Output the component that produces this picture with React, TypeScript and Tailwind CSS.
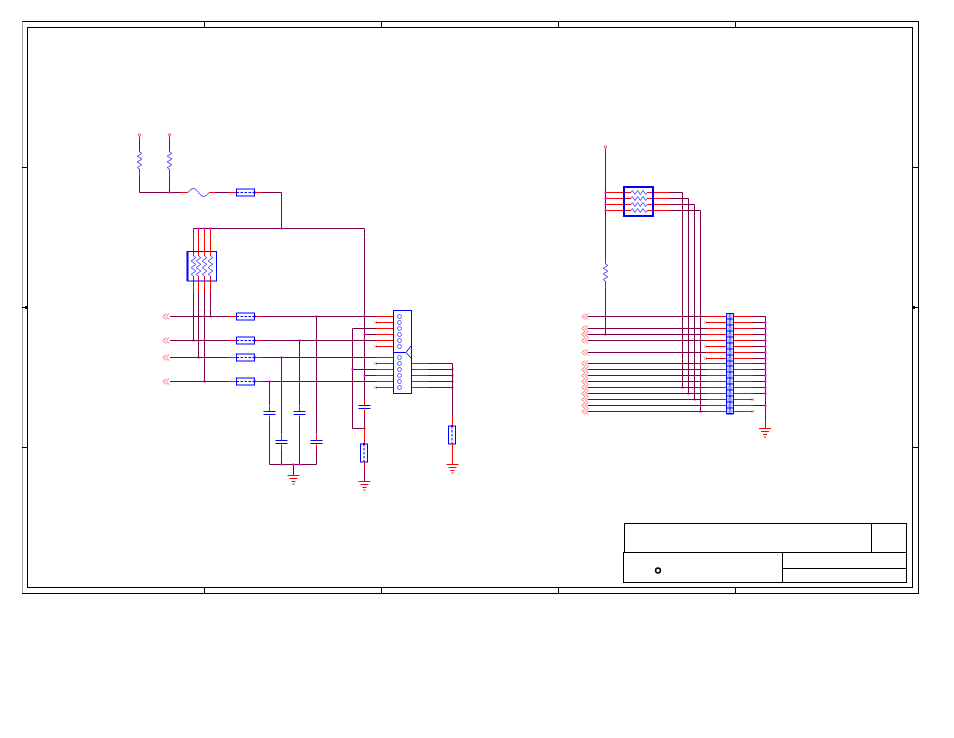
const P = "#7d0044";
const R = "#ff0000";
const B = "#0000ff";
const Z = "#3c3cff";
const J = "#ff00ff";
const K = "#000000";

type Pts = [number, number][];

function L({ x1, y1, x2, y2, c = P, w = 1 }: { x1: number; y1: number; x2: number; y2: number; c?: string; w?: number }) {
  return <line x1={x1} y1={y1} x2={x2} y2={y2} stroke={c} strokeWidth={w} />;
}
function Poly({ pts, c = P, w = 1 }: { pts: Pts; c?: string; w?: number }) {
  return <polyline points={pts.map((p) => p.join(",")).join(" ")} fill="none" stroke={c} strokeWidth={w} />;
}
function Dot({ x, y }: { x: number; y: number }) {
  return <rect x={x - 1} y={y - 1} width={2} height={2} fill={J} />;
}
function Pin({ x, y }: { x: number; y: number }) {
  return <circle cx={x} cy={y} r={1.3} fill="#ffdddd" stroke="#ff4040" strokeWidth={0.8} />;
}
function X({ x, y }: { x: number; y: number }) {
  return (
    <g stroke="#b89070" strokeWidth={0.7}>
      <line x1={x - 1.6} y1={y - 1.6} x2={x + 1.6} y2={y + 1.6} />
      <line x1={x - 1.6} y1={y + 1.6} x2={x + 1.6} y2={y - 1.6} />
    </g>
  );
}
function Arrow({ x, y }: { x: number; y: number }) {
  return (
    <g fill="none" stroke="#ff5a5a" strokeWidth={1}>
      <polyline points={`${x + 3},${y - 3} ${x},${y} ${x + 3},${y + 3}`} />
      <polyline points={`${x + 6},${y - 3} ${x + 3},${y} ${x + 6},${y + 3}`} />
    </g>
  );
}
function ZigV({ x, y1, y2 }: { x: number; y1: number; y2: number }) {
  const n = 6;
  const pts: Pts = [[x, y1]];
  for (let i = 0; i < n; i++) {
    pts.push([x + (i % 2 === 0 ? 2.4 : -2.4), y1 + ((i + 0.5) * (y2 - y1)) / n]);
  }
  pts.push([x, y2]);
  return <Poly pts={pts} c={Z} w={0.9} />;
}
function ZigH({ y, x1, x2 }: { y: number; x1: number; x2: number }) {
  const n = 6;
  const pts: Pts = [[x1, y]];
  for (let i = 0; i < n; i++) {
    pts.push([x1 + ((i + 0.5) * (x2 - x1)) / n, y + (i % 2 === 0 ? -2 : 2)]);
  }
  pts.push([x2, y]);
  return <Poly pts={pts} c={Z} w={0.9} />;
}
function FerriteH({ x, y }: { x: number; y: number }) {
  return (
    <g>
      <rect x={x} y={y - 3.5} width={18} height={7} fill="white" stroke={B} strokeWidth={1} />
      <line x1={x} y1={y} x2={x + 18} y2={y} stroke={B} strokeWidth={1} strokeDasharray="2.5 1.5" />
      <rect x={x + 17} y={y - 1} width={2} height={2} fill={B} />
    </g>
  );
}
function FerriteV({ x, y }: { x: number; y: number }) {
  return (
    <g>
      <rect x={x - 3.5} y={y} width={7} height={18} fill="white" stroke={B} strokeWidth={1} />
      <line x1={x} y1={y} x2={x} y2={y + 18} stroke={B} strokeWidth={1} strokeDasharray="2.5 1.5" />
      <rect x={x - 1} y={y - 1} width={2} height={2} fill={B} />
    </g>
  );
}
function Cap({ x, y }: { x: number; y: number }) {
  return (
    <g>
      <L x1={x} y1={y - 8} x2={x} y2={y - 2} c={R} />
      <L x1={x} y1={y + 2} x2={x} y2={y + 8} c={R} />
      <L x1={x - 6} y1={y - 2} x2={x + 6} y2={y - 2} c={B} />
      <L x1={x - 6} y1={y + 1} x2={x + 6} y2={y + 1} c={B} />
    </g>
  );
}
function Gnd({ x, y, w = 12 }: { x: number; y: number; w?: number }) {
  return (
    <g stroke={R} strokeWidth={1}>
      <line x1={x - w / 2} y1={y} x2={x + w / 2} y2={y} />
      <line x1={x - w * 0.33} y1={y + 3} x2={x + w * 0.33} y2={y + 3} />
      <line x1={x - w * 0.17} y1={y + 6} x2={x + w * 0.17} y2={y + 6} />
      <line x1={x - 1} y1={y + 8.5} x2={x + 1} y2={y + 8.5} />
    </g>
  );
}

function Frame() {
  const hTicks = [204.5, 381.5, 558.5, 735.5];
  const vTicks = [167.5, 307.5, 447.5];
  return (
    <g>
      <L x1={22} y1={21.5} x2={918.5} y2={21.5} c={K} />
      <L x1={22.5} y1={21.5} x2={22.5} y2={593} c="#a8a8a8" />
      <L x1={918.5} y1={21} x2={918.5} y2={594} c={K} />
      <L x1={22} y1={593.5} x2={919} y2={593.5} c={K} />
      <rect x={27.5} y={27.5} width={885} height={560} fill="none" stroke={K} strokeWidth={1} />
      {hTicks.map((x) => (
        <g key={x}>
          <L x1={x} y1={22} x2={x} y2={27} c={K} />
          <L x1={x} y1={588} x2={x} y2={593} c={K} />
        </g>
      ))}
      {vTicks.map((y) => (
        <g key={y}>
          <L x1={22} y1={y} x2={27} y2={y} c={K} />
          <L x1={913} y1={y} x2={918} y2={y} c={K} />
        </g>
      ))}
      <rect x={25} y={306} width={2} height={3} fill={K} />
      <rect x={913} y={306} width={2} height={3} fill={K} />
      {/* title block */}
      <rect x={624.5} y={523.5} width={282} height={29} fill="none" stroke={K} />
      <L x1={871.5} y1={523} x2={871.5} y2={552} c={K} />
      <rect x={623.5} y={552.5} width={283} height={30} fill="none" stroke={K} />
      <L x1={782.5} y1={552} x2={782.5} y2={582} c={K} />
      <L x1={782} y1={568.5} x2={906} y2={568.5} c={K} />
      <circle cx={658} cy={570.5} r={2.4} fill="white" stroke={K} strokeWidth={1.5} />
    </g>
  );
}

function LeftSheet() {
  const rows = [316.5, 340.5, 357.5, 381.5];
  const stubsX = [193.5, 198.5, 204.5, 210.5];
  const stubEnd = [340.5, 357.5, 381.5, 316.5];
  const pinRows = [316.5, 322.5, 328.5, 334.5, 340.5, 346.5, 357.5, 363.5, 369.5, 375.5, 381.5, 387.5];
  const rightRows = [363.5, 369.5, 375.5, 381.5, 387.5];
  return (
    <g>
      <Poly pts={[[139.5, 170], [139.5, 192.5], [181, 192.5]]} />
      <L x1={139.5} y1={135} x2={139.5} y2={152} c={R} />
      <L x1={139.5} y1={169} x2={139.5} y2={176} c={R} />
      <L x1={169.5} y1={135} x2={169.5} y2={152} c={R} />
      <L x1={169.5} y1={169} x2={169.5} y2={176} c={R} />
      <L x1={139.5} y1={140} x2={139.5} y2={150} c={P} />
      <L x1={169.5} y1={140} x2={169.5} y2={150} c={P} />
      <L x1={169.5} y1={176} x2={169.5} y2={192.5} />
      <ZigV x={139.5} y1={152} y2={169} />
      <ZigV x={169.5} y1={152} y2={169} />
      <Pin x={139.5} y={135} />
      <Pin x={169.5} y={135} />
      <L x1={181} y1={192.5} x2={188} y2={192.5} c={R} />
      <path d="M188 192.5 C192 187,195 187.5,198.5 192.5 C202 197.5,205 198,209 192.5" fill="none" stroke={Z} strokeWidth={1} />
      <L x1={209} y1={192.5} x2={216} y2={192.5} c={R} />
      <L x1={216} y1={192.5} x2={229} y2={192.5} />
      <L x1={229} y1={192.5} x2={236} y2={192.5} c={R} />
      <L x1={255} y1={192.5} x2={262} y2={192.5} c={R} />
      <Poly pts={[[262, 192.5], [281.5, 192.5], [281.5, 228.5]]} />
      <FerriteH x={236.5} y={192.5} />
      <Dot x={169.5} y={192.5} />

      <Poly pts={[[193, 228.5], [364.5, 228.5], [364.5, 400]]} />
      <Dot x={281.5} y={228.5} />
      {stubsX.map((x, i) => (
        <g key={x}>
          <L x1={x} y1={228.5} x2={x} y2={256} c={R} />
          <L x1={x} y1={276} x2={x} y2={293} c={R} />
          <L x1={x} y1={293} x2={x} y2={stubEnd[i]} />
          <ZigV x={x} y1={256} y2={276} />
          <Dot x={x} y={stubEnd[i]} />
          {i > 0 && <Dot x={x} y={228.5} />}
        </g>
      ))}
      <rect x={187.5} y={251.5} width={29} height={29.5} fill="none" stroke={B} />
      <L x1={187.5} y1={251} x2={187.5} y2={281} c={B} w={2} />

      {rows.map((y, i) => (
        <g key={y}>
          <Arrow x={163} y={y} />
          <L x1={170} y1={y} x2={229} y2={y} />
          <L x1={229} y1={y} x2={236} y2={y} c={R} />
          <L x1={255} y1={y} x2={262} y2={y} c={R} />
          <L x1={262} y1={y} x2={i === 3 ? 269.5 : 376} y2={y} />
          <FerriteH x={236.5} y={y} />
        </g>
      ))}
      <L x1={269.5} y1={381.5} x2={376} y2={381.5} />
      <Dot x={316.5} y={316.5} />
      <Dot x={299.5} y={340.5} />
      <Dot x={281.5} y={357.5} />
      <Dot x={269.5} y={381.5} />

      <L x1={269.5} y1={381.5} x2={269.5} y2={405} />
      <L x1={299.5} y1={340.5} x2={299.5} y2={405} />
      <L x1={281.5} y1={357.5} x2={281.5} y2={434} />
      <L x1={316.5} y1={316.5} x2={316.5} y2={434} />
      <Cap x={269.5} y={413.5} />
      <Cap x={299.5} y={413.5} />
      <Cap x={281.5} y={442.5} />
      <Cap x={316.5} y={442.5} />
      <Poly pts={[[269.5, 421], [269.5, 464.5], [316.5, 464.5], [316.5, 450]]} />
      <L x1={299.5} y1={421} x2={299.5} y2={464} />
      <L x1={281.5} y1={450} x2={281.5} y2={464} />
      <L x1={293.5} y1={464} x2={293.5} y2={475} />
      <Dot x={281.5} y={464.5} />
      <Dot x={293.5} y={464.5} />
      <Dot x={299.5} y={464.5} />
      <Gnd x={293.5} y={475.5} />

      {/* connector */}
      <Poly pts={[[352.5, 370], [352.5, 328.5], [376, 328.5]]} />
      <Poly pts={[[352.5, 370], [352.5, 428.5], [364.5, 428.5]]} />
      <L x1={352.5} y1={369.5} x2={376} y2={369.5} />
      <L x1={364.5} y1={334.5} x2={376} y2={334.5} />
      <L x1={364.5} y1={375.5} x2={376} y2={375.5} />
      <Dot x={364.5} y={334.5} />
      <Dot x={352.5} y={369.5} />
      <Dot x={364.5} y={375.5} />
      <Cap x={364.5} y={407.5} />
      <L x1={364.5} y1={415} x2={364.5} y2={428} />
      <Dot x={364.5} y={428.5} />
      <L x1={364.5} y1={428} x2={364.5} y2={443} c={R} />
      <FerriteV x={364} y={444} />
      <L x1={364.5} y1={462} x2={364.5} y2={470} c={R} />
      <L x1={364.5} y1={470} x2={364.5} y2={481} c={P} />
      <Gnd x={364.5} y={481.5} />

      {pinRows.map((y) => (
        <L key={y} x1={376} y1={y} x2={394} y2={y} c={R} />
      ))}
      {[322.5, 346.5, 363.5, 387.5].map((y) => (
        <X key={y} x={375.5} y={y} />
      ))}
      <rect x={393.5} y={310.5} width={18} height={83} fill="white" stroke={B} />
      <L x1={393.5} y1={352.5} x2={406} y2={352.5} c={B} />
      <Poly pts={[[411, 346], [406, 352.5], [411, 358]]} c={B} />
      {pinRows.map((y) => (
        <circle key={y} cx={399.5} cy={y} r={2} fill="white" stroke={Z} strokeWidth={0.8} />
      ))}
      {rightRows.map((y) => (
        <g key={y}>
          <L x1={412} y1={y} x2={428} y2={y} c={R} />
          <L x1={428} y1={y} x2={452.5} y2={y} />
          {y !== 363.5 && <Dot x={452.5} y={y} />}
        </g>
      ))}
      <L x1={452.5} y1={363.5} x2={452.5} y2={417} />
      <L x1={452.5} y1={417} x2={452.5} y2={426} c={R} />
      <FerriteV x={452} y={426} />
      <L x1={452.5} y1={444} x2={452.5} y2={464} c={R} />
      <Gnd x={452.5} y={464.5} />
    </g>
  );
}

function RightSheet() {
  const net = [192.5, 198.5, 204.5, 210.5];
  const drops = [682.5, 688.5, 694.5, 700.5];
  const ends = [387.5, 393.5, 399.5, 411.5];
  const leftRows = [316.5, 328.5, 334.5, 340.5, 352.5, 363.5, 369.5, 375.5, 381.5, 387.5, 393.5, 399.5, 405.5, 411.5];
  const allRows = [316.5, 322.5, 328.5, 334.5, 340.5, 346.5, 352.5, 358.5, 363.5, 369.5, 375.5, 381.5, 387.5, 393.5, 399.5, 405.5, 411.5];
  const rightJ = [322.5, 328.5, 334.5, 340.5, 346.5, 352.5, 358.5, 363.5, 369.5, 375.5, 381.5, 387.5, 393.5, 405.5];
  return (
    <g>
      <L x1={605.5} y1={147} x2={605.5} y2={258} />
      <L x1={605.5} y1={147} x2={605.5} y2={152} c={R} />
      <Pin x={605.5} y={147} />
      <L x1={605.5} y1={258} x2={605.5} y2={264} c={R} />
      <ZigV x={605.5} y1={264} y2={281} />
      <L x1={605.5} y1={281} x2={605.5} y2={288} c={R} />
      <L x1={605.5} y1={288} x2={605.5} y2={334.5} />
      <Dot x={605.5} y={334.5} />

      {net.map((y, i) => (
        <g key={y}>
          <L x1={605.5} y1={y} x2={631} y2={y} c={R} />
          <ZigH y={y} x1={631} x2={647} />
          <L x1={647} y1={y} x2={670} y2={y} c={R} />
          <Poly pts={[[670, y], [drops[i], y], [drops[i], ends[i]]]} />
          <Dot x={605.5} y={y} />
          <Dot x={drops[i]} y={ends[i]} />
        </g>
      ))}
      <rect x={624} y={187} width={29} height={29} fill="none" stroke={B} strokeWidth={2} />

      {leftRows.map((y) => (
        <g key={y}>
          <Arrow x={582} y={y} />
          <L x1={587.5} y1={y} x2={706} y2={y} />
        </g>
      ))}
      {allRows.map((y) => (
        <g key={y}>
          <L x1={706} y1={y} x2={727} y2={y} c={R} />
          <L x1={733} y1={y} x2={753} y2={y} c={R} />
          {y !== 399.5 && y !== 411.5 && <L x1={753} y1={y} x2={765.5} y2={y} />}
        </g>
      ))}
      {[322.5, 346.5, 358.5].map((y) => (
        <X key={y} x={705.5} y={y} />
      ))}
      {[399.5, 411.5].map((y) => (
        <X key={y} x={753} y={y} />
      ))}
      <rect x={726.5} y={313.5} width={7} height={100} fill="#dfe4ff" stroke={B} />
      <L x1={730} y1={313.5} x2={730} y2={413.5} c={B} />
      {allRows.map((y) => (
        <g key={y}>
          <L x1={726.5} y1={y + 2.5} x2={733.5} y2={y + 2.5} c={B} />
          <rect x={727.5} y={y - 1} width={5} height={2} fill="#9aa5ff" />
        </g>
      ))}
      <L x1={765.5} y1={316.5} x2={765.5} y2={422} />
      <L x1={765.5} y1={422} x2={765.5} y2={428} c={R} />
      {rightJ.map((y) => (
        <Dot key={y} x={765.5} y={y} />
      ))}
      <Gnd x={765} y={428.5} />
    </g>
  );
}

export default function App() {
  return (
    <div className="w-[954px] h-[738px] bg-white overflow-hidden">
      <svg width={954} height={738} viewBox="0 0 954 738" className="block">
        <Frame />
        <LeftSheet />
        <RightSheet />
      </svg>
    </div>
  );
}
